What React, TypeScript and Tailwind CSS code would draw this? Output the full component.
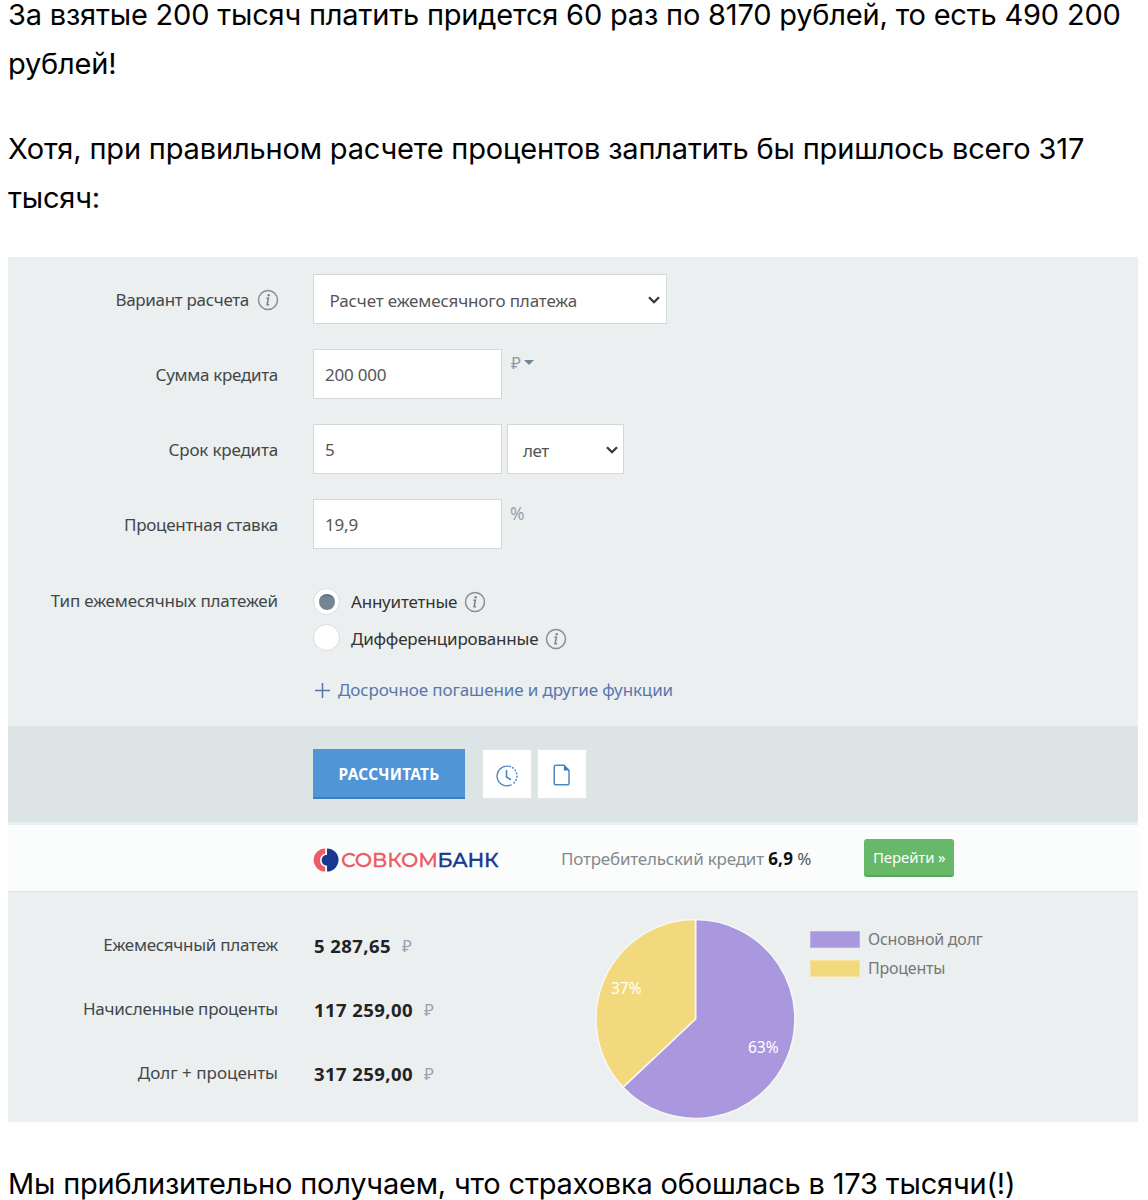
import type { ReactNode } from 'react';

function InfoIcon({ className = '' }: { className?: string }) {
  return (
    <svg className={`shrink-0 ${className}`} width="22" height="22" viewBox="0 0 22 22" fill="none">
      <circle cx="11" cy="11" r="9.5" stroke="#8a8e90" strokeWidth="1.5" />
      <circle cx="11.7" cy="6.3" r="1.2" fill="#808486" />
      <path d="M9.4 9.3h2l-1.3 6.4h2" stroke="#808486" strokeWidth="1.6" />
    </svg>
  );
}

function ChevronIcon() {
  return (
    <svg width="12" height="8" viewBox="0 0 12 8" fill="none" className="mt-[2px]">
      <path d="M1 1.2 6 6.2 11 1.2" stroke="#363636" strokeWidth="2.3" />
    </svg>
  );
}

function Field({ label, children }: { label: ReactNode; children: ReactNode }) {
  return (
    <div className="flex h-[50px] gap-[35px]">
      <div className="flex w-[270px] shrink-0 items-center justify-end pt-[2px] leading-[50px] text-[#43474a]">
        {label}
      </div>
      <div className="flex">{children}</div>
    </div>
  );
}

function Input({ children }: { children: ReactNode }) {
  return (
    <div className="w-[189px] border border-[#d3d9db] bg-white pl-[11px] leading-[49px] tracking-[-0.2px] text-[#555]">
      {children}
    </div>
  );
}

function Radio({ checked }: { checked?: boolean }) {
  return (
    <span className="flex size-[27px] items-center justify-center rounded-full border border-[#d9dddf] bg-white">
      {checked && <span className="ml-[1px] size-4 rounded-full border-t-2 border-[#5f6e79] bg-[#758592]" />}
    </span>
  );
}

function Result({ label, value }: { label: ReactNode; value: string }) {
  return (
    <div className="flex h-16 gap-[36px] leading-[64px]">
      <div className="w-[270px] text-right text-[#43474a]">{label}</div>
      <div className="flex pt-[1px] text-[18.5px] font-bold tracking-[0.42px] text-[#222]">
        {value}
        <span className="ml-[11px] text-[17px] font-normal tracking-normal text-[#97a4b3]">₽</span>
      </div>
    </div>
  );
}

function SovcombankLogo() {
  return (
    <svg width="188" height="28" viewBox="0 0 188 28" className="font-['Montserrat',Inter,sans-serif]">
      <path d="M12.2 2.5A11.5 11.5 0 0 0 12.2 25.5V21A7 7 0 0 1 12.2 7.5Z" fill="#ee5a65" />
      <path d="M14 2.5A11.5 11.5 0 0 1 14 25.5V19.5H12.5A5.5 5.5 0 0 1 12.5 9H14Z" fill="#17388e" />
      <text x="28" y="21.2" fontSize="20.5" fontWeight="500" fill="#ee5a65" stroke="#ee5a65" strokeWidth="0.3" textLength="97">
        СОВКОМ
      </text>
      <text x="124.5" y="21.2" fontSize="20.5" fontWeight="500" fill="#17388e" stroke="#17388e" strokeWidth="0.4" textLength="61">
        БАНК
      </text>
    </svg>
  );
}

function PieChart() {
  return (
    <svg width="202" height="202" viewBox="0 0 202 202" className="text-[15.5px]">
      <g stroke="#f7f7f5" strokeWidth="1.6" strokeLinejoin="round">
        <path d="M101.5 101V1.5A99.5 99.5 0 1 1 29 169.2Z" fill="#a998de" />
        <path d="M101.5 101 29 169.2A99.5 99.5 0 0 1 101.5 1.5Z" fill="#f3d97d" />
      </g>
      <text x="17" y="76" fill="#fff">37%</text>
      <text x="154" y="135" fill="#fff">63%</text>
    </svg>
  );
}

export default function App() {
  return (
    <div className="h-[1200px] overflow-hidden bg-[#fefefe] px-2 font-['Inter','Liberation_Sans',sans-serif] text-[29px] leading-[49px] text-black">
      <p className="-mt-[10px] whitespace-nowrap tracking-[-0.19px]">
        За взятые 200 тысяч платить придется 60 раз по 8170 рублей, то есть 490 200
        <br />
        рублей!
      </p>
      <p className="mt-[36px] whitespace-nowrap tracking-[-0.17px]">
        Хотя, при правильном расчете процентов заплатить бы пришлось всего 317
        <br />
        тысяч:
      </p>

      <div className="mt-[35px] w-[1130px] font-['Noto_Sans','Open_Sans',sans-serif] text-[17px]">
        {/* Parameters */}
        <div className="h-[469px] bg-[#ebeff0] pt-[17px]">
          <div className="flex flex-col gap-[25px]">
            <Field
              label={
                <>
                  <span className="tracking-[-0.32px]">Вариант расчета</span>
                  <InfoIcon className="-mr-[1px] ml-[8px]" />
                </>
              }
            >
              <div className="flex w-[354px] items-center justify-between border border-[#d3d9db] bg-white pr-[6px] pl-[15.5px] text-[#555]">
                <span className="pt-[3px] tracking-[-0.14px]">Расчет ежемесячного платежа</span>
                <ChevronIcon />
              </div>
            </Field>
            <Field label={<span className="tracking-[-0.3px]">Сумма кредита</span>}>
              <Input>200 000</Input>
              <div className="flex gap-[3px] pl-[9px] text-[#8b99a8]">
                <span className="leading-[28px]">₽</span>
                <svg className="mt-[11px]" width="10" height="5" viewBox="0 0 10 5">
                  <path d="M0 0h10L5 5Z" fill="#70859a" />
                </svg>
              </div>
            </Field>
            <Field label={<span className="tracking-[-0.18px]">Срок кредита</span>}>
              <Input>5</Input>
              <div className="ml-[5px] flex w-[117px] items-center justify-between border border-[#d3d9db] bg-white pr-[5px] pl-[15px] text-[#555]">
                <span className="pt-[3px] tracking-[-0.5px]">лет</span>
                <ChevronIcon />
              </div>
            </Field>
            <Field label={<span className="tracking-[-0.27px]">Процентная ставка</span>}>
              <Input>19,9</Input>
              <span className="pl-[8px] text-[17.5px] leading-[29px] text-[#95a2b0]">%</span>
            </Field>
          </div>

          <div className="mt-[38px] flex gap-[35px]">
            <div className="w-[270px] text-right leading-[28px] tracking-[-0.15px] text-[#43474a]">
              Тип ежемесячных платежей
            </div>
            <div className="text-[#333]">
              <div className="mt-[1px] flex h-[27px] leading-[27px]">
                <Radio checked />
                <span className="ml-[11px] tracking-[-0.2px]">Аннуитетные</span>
                <InfoIcon className="mt-[3px] ml-[7px]" />
              </div>
              <div className="mt-[9px] flex h-[27px] leading-[27px]">
                <Radio />
                <span className="mt-[1px] ml-[11px] tracking-[-0.21px]">Дифференцированные</span>
                <InfoIcon className="mt-[4px] ml-[7px]" />
              </div>
              <div className="mt-[25px] flex items-center gap-[8px] pl-[2px] leading-[27px] text-[#5877ac]">
                <svg width="15" height="15" viewBox="0 0 15 15" className="mt-[2px]">
                  <path d="M0 7.5h15M7.5 0v15" stroke="currentColor" strokeWidth="1.5" />
                </svg>
                <span className="tracking-[-0.12px]">Досрочное погашение и другие функции</span>
              </div>
            </div>
          </div>
        </div>

        {/* Actions */}
        <div className="flex h-24 bg-[#dde4e6] pt-[23px] pl-[305px]">
          <div className="h-[50px] w-[152px] border-b-2 border-[#3f7fbf] bg-[#5095d6] text-center text-[15.5px] leading-[51px] font-bold tracking-[0.2px] text-white">
            РАССЧИТАТЬ
          </div>
          <div className="ml-[17px] flex h-[50px] w-[50px] items-center justify-center border border-[#e1e5e6] bg-white">
            <svg width="22" height="22" viewBox="0 0 22 22" fill="none" stroke="#4c88c2" className="mt-[3px]">
              <path d="M12.5 1.3A9.8 9.8 0 1 0 15.5 19.6" strokeWidth="1.4" />
              <path d="M13 1.3A9.8 9.8 0 0 1 16.5 19.1" strokeWidth="1.5" strokeDasharray="1.8 1.5" />
              <path d="M10.5 5v7l4.5 2.8" strokeWidth="1.6" />
            </svg>
          </div>
          <div className="ml-[5px] flex h-[50px] w-[50px] items-center justify-center border border-[#e1e5e6] bg-white">
            <svg width="18" height="22" viewBox="0 0 18 22" fill="none" className="mt-[1px]">
              <path d="M3 1.2h8l5 5V19a1.8 1.8 0 0 1-1.8 1.8H3A1.8 1.8 0 0 1 1.2 19V3A1.8 1.8 0 0 1 3 1.2Z" stroke="#4c88c2" strokeWidth="1.5" />
              <path d="M10.8 1v5.5h5.5Z" fill="#3f7db9" />
            </svg>
          </div>
        </div>

        {/* Bank offer */}
        <div className="flex h-[70px] items-center border-t-[3px] border-b border-t-[#e9eef0] border-b-[#e0e5e7] bg-[#fbfdfc] pl-[305px]">
          <div className="mt-[3px] w-[248px]">
            <SovcombankLogo />
          </div>
          <div className="w-[303px] tracking-[-0.2px] text-[#85898c]">
            Потребительский кредит <b className="tracking-[0.2px] text-[#111]">6,9</b>
            <span className="text-[#555]"> %</span>
          </div>
          <div className="h-[38px] w-[90px] rounded-[3px] border-b-2 border-[#57a55b] bg-[#68b86a] pl-[9px] text-[15px] leading-[37px] tracking-[-0.13px] text-white">
            Перейти »
          </div>
        </div>

        {/* Results */}
        <div className="flex h-[230px] bg-[#ebeff0]">
          <div className="w-[586px] pt-[21px]">
            <Result label={<span className="tracking-[-0.26px]">Ежемесячный платеж</span>} value="5 287,65" />
            <Result label={<span className="tracking-[-0.23px]">Начисленные проценты</span>} value="117 259,00" />
            <Result label="Долг + проценты" value="317 259,00" />
          </div>
          <div className="pt-[26px]">
            <PieChart />
          </div>
          <div className="pt-[33px] pl-[14px] text-[16px] leading-[28px] tracking-[-0.22px] text-[#777]">
            <div className="flex items-center gap-[8px]">
              <span className="h-[17px] w-[50px] border border-[#bdb0e6] bg-[#a998de]" />
              Основной долг
            </div>
            <div className="mt-[1px] flex items-center gap-[8px]">
              <span className="h-[17px] w-[50px] border border-[#f6e3a0] bg-[#f3d97d]" />
              Проценты
            </div>
          </div>
        </div>
      </div>

      <p className="mt-[37px] whitespace-nowrap tracking-[-0.19px]">
        Мы приблизительно получаем, что страховка обошлась в 173 тысячи(!)
      </p>
    </div>
  );
}
